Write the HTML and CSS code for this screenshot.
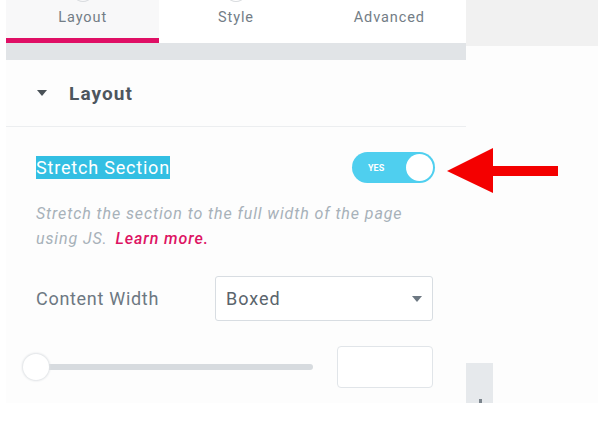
FILE: index.html
```html
<!DOCTYPE html>
<html>
<head>
<meta charset="utf-8">
<link rel="stylesheet" href="styles.css">
</head>
<body>
<div class="screen">
  <div class="panel">
    <div class="tabs">
      <div class="tab active"><span class="tab-icon"></span>Layout</div>
      <div class="tab"><span class="tab-icon"></span>Style</div>
      <div class="tab">Advanced</div>
    </div>
    <div class="strip"></div>
    <div class="section-head">
      <svg class="caret" width="10" height="6" viewBox="0 0 10 6"><polygon points="0,0 10,0 5,6" fill="#495157"/></svg>
      <span class="section-title">Layout</span>
    </div>
    <div class="controls">
      <div class="row stretch-row">
        <span class="label selected">Stretch Section</span>
        <div class="toggle"><span class="toggle-text">YES</span><span class="toggle-knob"></span></div>
      </div>
      <p class="desc">Stretch the section to the full width of the page using JS.<a class="learn">Learn more.</a></p>
      <div class="row width-row">
        <span class="label">Content Width</span>
        <div class="select"><span>Boxed</span><svg width="10" height="6" viewBox="0 0 10 6"><polygon points="0,0 10,0 5,6" fill="#6d7882"/></svg></div>
      </div>
      <div class="row slider-row">
        <div class="slider"><div class="track"></div><div class="knob"></div></div>
        <div class="num"></div>
      </div>
    </div>
  </div>
  <div class="canvas">
    <div class="canvas-top"></div>
    <div class="canvas-fill"></div>
    <div class="handle"><span class="handle-mark"></span></div>
  </div>
  <svg class="arrow" width="112" height="46" viewBox="0 0 112 46">
    <polygon points="0,23 46,0 46,18 111,18 111,28 46,28 46,45" fill="#f40000"/>
  </svg>
</div>
</body>
</html>
```

FILE: styles.css
```css
* { box-sizing: border-box; }
html, body { margin: 0; padding: 0; background: #ffffff; }
body { font-family: Roboto, "Liberation Sans", sans-serif; }

.screen {
  position: relative;
  display: flex;
  height: 403px;
  padding-left: 6px;
}

.panel {
  width: 460px;
  background: #fdfdfd;
  display: flex;
  flex-direction: column;
  box-shadow: 1px 0 0 #eceef0;
}

.tabs {
  display: flex;
  height: 43px;
  background: #ffffff;
}
.tab {
  flex: 1;
  position: relative;
  text-align: center;
  font-size: 14.5px;
  letter-spacing: 0.9px;
  color: #737d86;
  padding-top: 9px;
  border-bottom: 5px solid transparent;
}
.tab.active {
  background: #f8f8f9;
  border-bottom-color: #df0f65;
}
.tab-icon {
  position: absolute;
  left: 50%;
  top: -6px;
  width: 14px;
  height: 8px;
  margin-left: -7px;
  border-radius: 50%;
  border: 1.5px solid #d9dcdf;
}

.strip {
  height: 17px;
  background: #e1e4e7;
}

.section-head {
  height: 67px;
  display: flex;
  align-items: center;
  padding-left: 31px;
  border-bottom: 1px solid #eceef0;
  background: #fdfdfd;
}
.caret { margin-right: 22px; }
.section-title {
  font-weight: 700;
  font-size: 19px;
  letter-spacing: 1.1px;
  color: #4d565e;
}

.controls {
  padding: 25px 33px 0 30px;
  flex: 1;
}
.row {
  display: flex;
  align-items: center;
  justify-content: space-between;
}
.stretch-row { height: 31px; }
.label {
  font-size: 18px;
  letter-spacing: 0.7px;
  color: #6d7882;
}
.label.selected {
  background: #33bfe3;
  color: #ffffff;
  line-height: 23px;
  letter-spacing: 0.8px;
}
.toggle {
  width: 83px;
  height: 31px;
  border-radius: 16px;
  background: #4fcfef;
  position: relative;
  margin-right: -2px;
  display: flex;
  align-items: center;
}
.toggle-text {
  font-size: 9px;
  font-weight: 700;
  color: #ffffff;
  margin-left: 16px;
}
.toggle-knob {
  position: absolute;
  right: 2px;
  top: 2px;
  width: 27px;
  height: 27px;
  border-radius: 50%;
  background: #ffffff;
}

.desc {
  margin: 18px 0 0 0;
  font-size: 16px;
  letter-spacing: 0.9px;
  line-height: 25px;
  font-style: italic;
  color: #a7b1b9;
}
.learn {
  color: #dd1463;
  font-weight: 500;
  margin-left: 8px;
}

.width-row { margin-top: 25px; height: 45px; }
.select {
  width: 218px;
  height: 45px;
  border: 1px solid #d8dde2;
  border-radius: 3px;
  background: #ffffff;
  display: flex;
  align-items: center;
  justify-content: space-between;
  padding: 0 10px 0 10px;
  font-size: 18px;
  letter-spacing: 1px;
  color: #5a646c;
}

.slider-row { margin-top: 25px; height: 42px; }
.slider {
  position: relative;
  width: 277px;
  height: 26px;
  display: flex;
  align-items: center;
}
.track {
  width: 100%;
  height: 6px;
  border-radius: 3px;
  background: #d7dbdf;
}
.knob {
  position: absolute;
  left: -13px;
  top: 0;
  width: 26px;
  height: 26px;
  border-radius: 50%;
  background: #ffffff;
  box-shadow: 0 0 2px 1px #dfe2e5;
}
.num {
  width: 96px;
  height: 42px;
  border: 1.5px solid #e1e5e9;
  border-radius: 4px;
  background: #ffffff;
}

.canvas {
  flex: 1;
  display: flex;
  flex-direction: column;
  background: #fdfdfd;
}
.canvas-top {
  height: 46px;
  background: #f1f1f1;
}
.canvas-fill { flex: 1; }
.handle {
  width: 27px;
  height: 40px;
  background: #e6e9ec;
  position: relative;
}
.handle-mark {
  position: absolute;
  left: 13px;
  bottom: 0;
  width: 3px;
  height: 4px;
  background: #7b848c;
}

.arrow {
  position: absolute;
  left: 447px;
  top: 148px;
}
```
